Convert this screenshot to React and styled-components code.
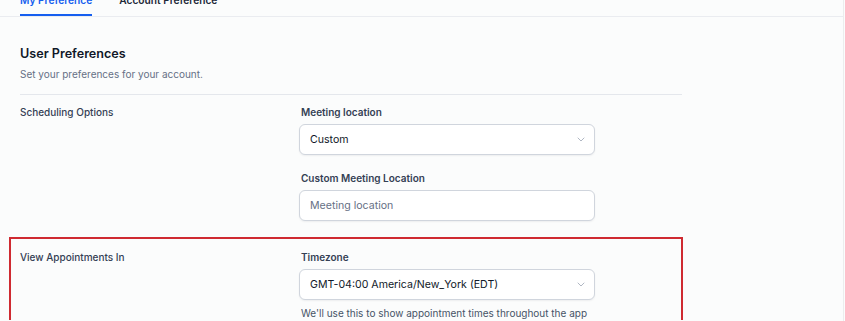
import React from 'react';
import styled, { createGlobalStyle } from 'styled-components';

const GlobalStyle = createGlobalStyle`
	* {
		box-sizing: border-box;
	}
	body {
		margin: 0;
		background-color: #fbfcfc;
		font-family: Inter, "Liberation Sans", sans-serif;
		overflow: hidden;
	}
`;

const Page = styled.div`
	width: 844px;
	height: 321px;
	border-right: 1px solid #eceded;
	overflow: hidden;
`;

const TabBar = styled.div`
	display: flex;
	gap: 27px;
	margin-top: -7px;
	padding-left: 20px;
	border-bottom: 1px solid #eaecf0;
`;

const Tab = styled.div`
	font-size: 10.2px;
	font-weight: 600;
	line-height: 14px;
	padding-bottom: 7px;
	color: ${props => (props.active ? '#155eef' : '#1d2939')};
	border-bottom: 2px solid ${props => (props.active ? '#155eef' : 'transparent')};
`;

const Content = styled.div`
	width: 682px;
	padding: 28px 0 0 20px;
`;

const Heading = styled.h2`
	margin: 0;
	font-size: 12.6px;
	font-weight: 600;
	line-height: 18px;
	color: #101828;
`;

const Subtitle = styled.p`
	margin: 3px 0 0;
	font-size: 10px;
	line-height: 16px;
	color: #667085;
`;

const Divider = styled.hr`
	margin: 12px 0 0;
	border: none;
	border-top: 1px solid #e4e7ec;
`;

const Row = styled.div`
	display: grid;
	grid-template-columns: 279px 296px;
	padding-top: ${props => (props.flush ? '0' : '9px')};
`;

const Highlight = styled.div`
	margin: 16px -1px 0 -11px;
	padding: 10px 0 0 9px;
	border: 2px solid #cf2a31;
	border-bottom: none;
`;

const RowLabel = styled.div`
	font-size: 10px;
	font-weight: 500;
	line-height: 14px;
	color: #344054;
	padding-top: 1px;
`;

const Fields = styled.div`
	display: flex;
	flex-direction: column;
	gap: 15px;
`;

const Field = styled.div`
	display: flex;
	flex-direction: column;
`;

const FieldLabel = styled.label`
	font-size: 10px;
	font-weight: 600;
	line-height: 14px;
	color: #344054;
	padding-left: 2px;
	margin-bottom: 5px;
	margin-top: 1px;
`;

const Box = styled.div`
	display: flex;
	align-items: center;
	justify-content: space-between;
	height: 31px;
	padding: 0 9px 0 10px;
	background-color: #ffffff;
	border: 1px solid #d0d5dd;
	border-radius: 6px;
	box-shadow: 0 1px 2px rgba(16, 24, 40, 0.06);
	font-size: 10.6px;
	color: ${props => (props.placeholder ? '#667085' : '#101828')};
`;

const Hint = styled.div`
	margin-top: 6px;
	padding-left: 2px;
	font-size: 10px;
	line-height: 14px;
	color: #475467;
`;

function Chevron() {
	return (
		<svg width="8" height="5" viewBox="0 0 8 5" fill="none">
			<path d="M1 1l3 3 3-3" stroke="#b0b7c3" strokeWidth="1" strokeLinecap="round" strokeLinejoin="round" />
		</svg>
	);
}

function Select({ value }) {
	return (
		<Box>
			<span>{value}</span>
			<Chevron />
		</Box>
	);
}

export default function App() {
	return (
		<>
			<GlobalStyle />
			<Page>
				<TabBar>
					<Tab active>My Preference</Tab>
					<Tab>Account Preference</Tab>
				</TabBar>
				<Content>
					<Heading>User Preferences</Heading>
					<Subtitle>Set your preferences for your account.</Subtitle>
					<Divider />
					<Row>
						<RowLabel>Scheduling Options</RowLabel>
						<Fields>
							<Field>
								<FieldLabel>Meeting location</FieldLabel>
								<Select value="Custom" />
							</Field>
							<Field>
								<FieldLabel>Custom Meeting Location</FieldLabel>
								<Box placeholder>Meeting location</Box>
							</Field>
						</Fields>
					</Row>
					<Highlight>
						<Row flush>
							<RowLabel>View Appointments In</RowLabel>
							<Field>
								<FieldLabel>Timezone</FieldLabel>
								<Select value="GMT-04:00 America/New_York (EDT)" />
								<Hint>We'll use this to show appointment times throughout the app</Hint>
							</Field>
						</Row>
					</Highlight>
				</Content>
			</Page>
		</>
	);
}
